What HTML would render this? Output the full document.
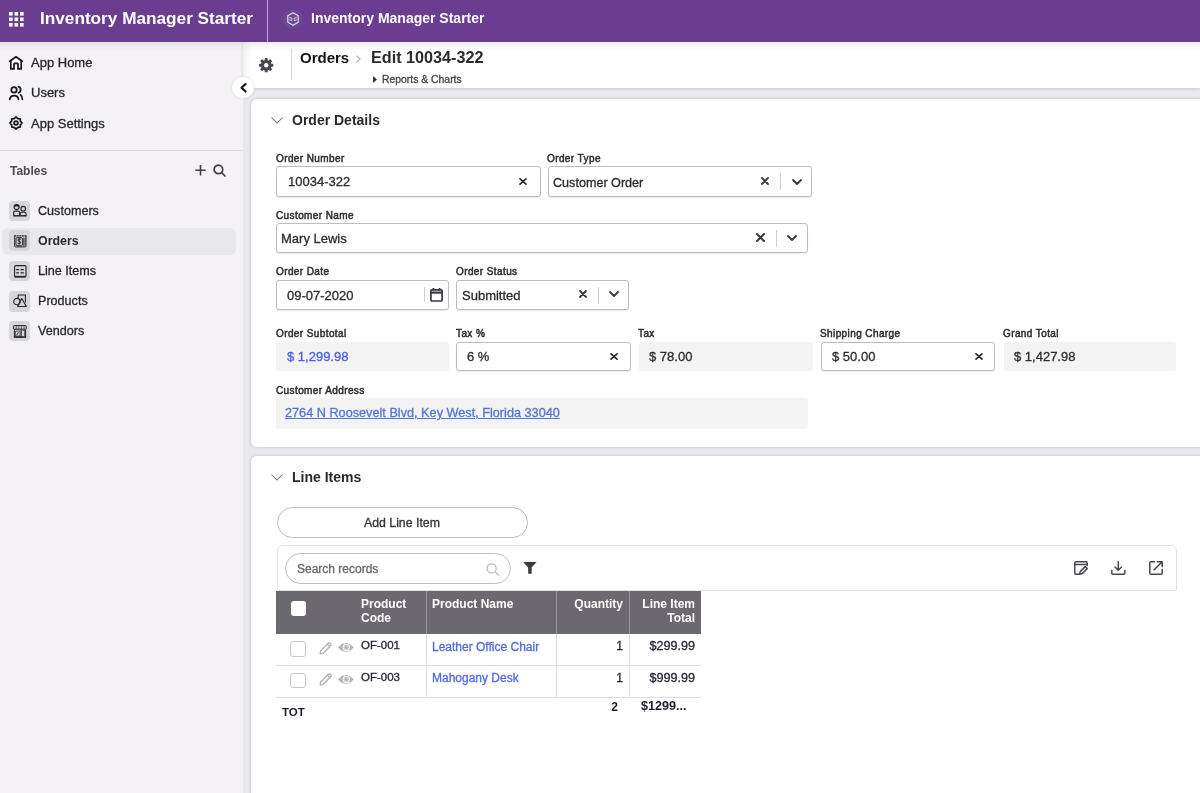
<!DOCTYPE html>
<html><head><meta charset="utf-8">
<style>
*{box-sizing:border-box;margin:0;padding:0}
html,body{width:1200px;height:793px;overflow:hidden;background:#e9e7eb;font-family:"Liberation Sans",sans-serif;color:#333}
.t,.lbl,.val{will-change:transform}
.t,.val{-webkit-text-stroke:0.3px currentColor}
.t[style*="bold"]{-webkit-text-stroke:0}
.a{position:absolute}
.t{position:absolute;line-height:1;white-space:nowrap}
svg{position:absolute;overflow:visible}
#hdr{left:0;top:0;width:1200px;height:42px;background:#6a3d91}
#side{left:0;top:42px;width:243px;height:751px;background:#f4f2f5}
.ib{position:absolute;left:9.2px;width:20.8px;height:20.5px;border-radius:4px;background:#d6d5d9}
.card{position:absolute;left:250.5px;width:960px;background:#fff;border-radius:6px;box-shadow:0 0 3px rgba(40,30,50,0.22)}
.lbl{position:absolute;line-height:1;white-space:nowrap;font-size:10px;font-weight:normal;letter-spacing:0.4px;-webkit-text-stroke:0.5px #2e2e32;color:#2e2e32}
.inp{position:absolute;height:30px;border:1px solid #bdbcc0;border-radius:3px;background:#fff;box-shadow:0 1px 1px rgba(0,0,0,0.08)}
.ro{position:absolute;height:29px;border-radius:3px;background:#f3f3f4}
.val{position:absolute;line-height:1;white-space:nowrap;font-size:13px;color:#2b2b30}
</style></head><body>
<!-- HEADER -->
<div id="hdr" class="a"></div>
<div class="a" style="left:0;top:42px;width:1200px;height:11px;background:linear-gradient(rgba(0,0,0,0.075),rgba(0,0,0,0.02) 50%,rgba(0,0,0,0));z-index:5"></div>
<svg style="left:9px;top:12px" width="15" height="15" viewBox="0 0 15 15" fill="#fff">
<rect x="0" y="0" width="3.6" height="3.6"/><rect x="5.5" y="0" width="3.6" height="3.6"/><rect x="11" y="0" width="3.6" height="3.6"/>
<rect x="0" y="5.5" width="3.6" height="3.6"/><rect x="5.5" y="5.5" width="3.6" height="3.6"/><rect x="11" y="5.5" width="3.6" height="3.6"/>
<rect x="0" y="11" width="3.6" height="3.6"/><rect x="5.5" y="11" width="3.6" height="3.6"/><rect x="11" y="11" width="3.6" height="3.6"/>
</svg>
<div class="t" style="left:40px;top:10.3px;font-size:17.2px;font-weight:bold;color:#fff">Inventory Manager Starter</div>
<div class="a" style="left:267px;top:0;width:1px;height:42px;background:rgba(255,255,255,0.55)"></div>
<div class="a" style="left:283px;top:9px;width:20px;height:20px;border-radius:50%;background:#6b4893"></div>
<svg style="left:287px;top:12px" width="12" height="14" viewBox="0 0 12 14" fill="none" stroke="#e6dcef" stroke-width="1.15" stroke-linejoin="round" stroke-linecap="round"><path d="M6 0.7 L11.2 3.7 L11.2 10.3 L6 13.3 L0.8 10.3 L0.8 3.7 Z"/><path d="M2.6 5.4 L5 6.4 L5 7.2 M2.6 7.8 L4.6 8.6 M9.4 5.4 L7 6.4 L7 7.2 M9.4 7.8 L7.4 8.6" stroke-width="1"/></svg>
<div class="t" style="left:311px;top:10.9px;font-size:14px;font-weight:bold;color:#fff">Inventory Manager Starter</div>

<!-- SIDEBAR -->
<div id="side" class="a"></div>
<!-- app home icon -->
<svg style="left:9px;top:56px" width="14" height="14" viewBox="0 0 14 14" fill="none" stroke="#151518" stroke-width="1.7" stroke-linejoin="round" stroke-linecap="round">
<path d="M0.7 5.3 L7 0.8 L13.3 5.3"/><path d="M1.8 4.8 V12.9 H5 V8.3 Q5 7.4 5.9 7.4 H8.1 Q9 7.4 9 8.3 V12.9 H12.2 V4.8"/>
</svg>
<div class="t" style="left:30.6px;top:55.8px;font-size:13px;color:#28282c">App Home</div>
<svg style="left:9px;top:85px" width="14" height="15" viewBox="0 0 14 15" fill="none" stroke="#151518" stroke-width="1.75" stroke-linecap="round">
<circle cx="5" cy="4.9" r="2.7"/><path d="M0.8 14.3 A4.4 4.3 0 0 1 9.5 14.3"/><path d="M9.4 1.7 A3.2 3.2 0 0 1 9.4 7.8"/><path d="M11.6 9.9 Q13.3 11.3 13.4 14.3"/>
</svg>
<div class="t" style="left:30.6px;top:86.2px;font-size:13px;color:#28282c">Users</div>
<svg style="left:9px;top:116px" width="14" height="14" viewBox="0 0 14 14" fill="none" stroke="#151518" stroke-width="1.75" stroke-linejoin="round">
<path d="M7.00 0.9 L8.80 2.66 L11.24 2.76 L11.34 5.20 L13.1 7.00 L11.34 8.80 L11.24 11.24 L8.80 11.34 L7.00 13.1 L5.20 11.34 L2.76 11.24 L2.66 8.80 L0.9 7.00 L2.66 5.20 L2.76 2.76 L5.20 2.66 Z"/>
<circle cx="7" cy="7" r="1.9"/>
</svg>
<div class="t" style="left:30.6px;top:116.6px;font-size:13px;color:#28282c">App Settings</div>
<div class="a" style="left:0;top:150px;width:243px;height:1px;background:#dcdbdf"></div>
<div class="t" style="left:9.8px;top:164.8px;font-size:12px;font-weight:bold;color:#4d4a52">Tables</div>
<svg style="left:195px;top:165px" width="11" height="11" viewBox="0 0 11 11" stroke="#3f3c44" stroke-width="1.6"><path d="M5.5 0 V10.4 M0.3 5.2 H10.7"/></svg>
<svg style="left:213px;top:164px" width="13" height="13" viewBox="0 0 13 13" fill="none" stroke="#3f3c44" stroke-width="1.7"><circle cx="5.4" cy="5.4" r="4.3"/><path d="M8.6 8.6 L12 12" stroke-linecap="round"/></svg>

<div class="a" style="left:2px;top:227.5px;width:234px;height:27px;border-radius:6px;background:#e8e7ea"></div>
<div class="ib" style="top:200.5px"></div>
<div class="ib" style="top:230.3px"></div>
<div class="ib" style="top:260.7px"></div>
<div class="ib" style="top:291px"></div>
<div class="ib" style="top:320.8px"></div>
<!-- table icons -->
<svg style="left:13px;top:204px" width="14" height="13" viewBox="0 0 14 13" fill="none" stroke="#26262a" stroke-width="1.1">
<circle cx="3.6" cy="3.1" r="2.5"/><path d="M1.2 2.6 Q3.6 0.2 6 2.6" stroke-width="1.6"/><path d="M0.7 11.6 V8.7 Q0.7 7.1 2.3 7.1 H4.9 Q6.5 7.1 6.5 8.7 V11.6"/><circle cx="10.2" cy="4.7" r="2.3"/><path d="M7.3 11.6 V9.8 Q7.3 8.3 8.8 8.3 H11.6 Q13.1 8.3 13.1 9.8 V11.6"/><path d="M0.3 11.8 H13.5" stroke-width="1.5"/>
</svg>
<svg style="left:14px;top:235px" width="13" height="13" viewBox="0 0 13 13" fill="none" stroke="#26262a" stroke-width="1">
<path d="M0.1 0.9 H12.6" stroke-width="1.4" stroke-dasharray="2 0.6"/><path d="M0.7 1.2 V11.3 Q0.7 11.9 1.3 11.9 H11.4 Q12 11.9 12 11.3 V1.2"/><rect x="2" y="2.7" width="6.4" height="8" rx="0.8"/><path d="M9.7 2.6 V10.8 M11 2.6 V10.8" stroke-width="0.8"/><path d="M6.6 4.6 Q6.2 3.8 5.2 3.9 Q4 4 4.1 5.1 Q4.2 6 5.3 6.3 Q6.5 6.6 6.4 7.8 Q6.3 8.8 5.1 8.8 Q4.1 8.7 3.8 8" stroke-width="1.05"/><path d="M5.2 3 V9.7" stroke-width="0.8"/>
</svg>
<svg style="left:14px;top:265px" width="13" height="13" viewBox="0 0 13 13" fill="none" stroke="#26262a" stroke-width="1.1">
<rect x="0.6" y="0.6" width="11.4" height="11.4" rx="1.2"/><path d="M0.6 11.6 H12" stroke-width="1.5"/><path d="M2.6 4.6 H4.6 M7 4.6 H9.4 M2.6 7.8 H4.6 M7 7.8 H9.4" stroke-width="1.2" stroke-linecap="round"/>
</svg>
<svg style="left:13px;top:294px" width="14" height="14" viewBox="0 0 14 14" fill="none" stroke="#26262a" stroke-width="1.1" stroke-linejoin="round">
<path d="M5.2 4.4 V1 H12.4 V8.4"/><circle cx="3.9" cy="7.6" r="3.2"/><path d="M8.8 4.6 L13.3 12.5 H4.6 Z"/>
</svg>
<svg style="left:13px;top:325px" width="14" height="13" viewBox="0 0 14 13" fill="none" stroke="#26262a" stroke-width="1">
<rect x="0.6" y="0.6" width="12.6" height="3.6" rx="0.6"/><path d="M3.2 0.6 V4.2 M5.8 0.6 V4.2 M8.4 0.6 V4.2 M11 0.6 V4.2" stroke-width="0.7"/><path d="M1.4 4.2 V12.1 H12.6 V4.2"/><path d="M0.8 12.1 H13" stroke-width="1.5"/><path d="M8.2 4.4 V12" stroke-width="1.1"/><path d="M2.6 6 H7 V11 H2.6 Z" stroke-width="0.7"/><path d="M3.6 10 L5.6 7.2" stroke-width="0.8"/><path d="M9.4 5.4 H11.6 V11" stroke-width="0.7"/>
</svg>
<div class="t" style="left:37.8px;top:204.8px;font-size:12.6px;color:#28282c">Customers</div>
<div class="t" style="left:37.8px;top:235.1px;font-size:12.4px;font-weight:bold;color:#2a2a2e">Orders</div>
<div class="t" style="left:37.8px;top:264.9px;font-size:12.6px;color:#28282c">Line Items</div>
<div class="t" style="left:37.8px;top:294.9px;font-size:12.6px;color:#28282c">Products</div>
<div class="t" style="left:37.8px;top:325.3px;font-size:12.6px;color:#28282c">Vendors</div>

<!-- MAIN -->
<div class="a" style="left:243px;top:42px;width:957px;height:46px;background:#fff;box-shadow:0 1px 3px rgba(40,30,50,0.14)"></div>
<div class="a" style="left:243px;top:42px;width:9px;height:46px;background:linear-gradient(90deg,rgba(0,0,0,0.05),rgba(0,0,0,0));z-index:4"></div>
<svg style="left:259.2px;top:57.5px" width="14.4" height="14.4" viewBox="-7.2 -7.2 14.4 14.4"><g fill="#4a4650"><circle r="5.3"/><rect x="-1.5" y="-7.15" width="3" height="3.4" rx="0.7" transform="rotate(0)"/><rect x="-1.5" y="-7.15" width="3" height="3.4" rx="0.7" transform="rotate(45)"/><rect x="-1.5" y="-7.15" width="3" height="3.4" rx="0.7" transform="rotate(90)"/><rect x="-1.5" y="-7.15" width="3" height="3.4" rx="0.7" transform="rotate(135)"/><rect x="-1.5" y="-7.15" width="3" height="3.4" rx="0.7" transform="rotate(180)"/><rect x="-1.5" y="-7.15" width="3" height="3.4" rx="0.7" transform="rotate(225)"/><rect x="-1.5" y="-7.15" width="3" height="3.4" rx="0.7" transform="rotate(270)"/><rect x="-1.5" y="-7.15" width="3" height="3.4" rx="0.7" transform="rotate(315)"/></g><circle r="2.2" fill="#fff"/></svg>
<div class="a" style="left:291px;top:49px;width:1px;height:31px;background:#d6d5d8"></div>
<div class="t" style="left:299.5px;top:50px;font-size:15px;font-weight:bold;color:#111">Orders</div>
<svg style="left:355px;top:54.5px" width="7" height="8" viewBox="0 0 7 8" fill="none" stroke="#b5b3b8" stroke-width="1.2"><path d="M1.5 0.8 L5 4 L1.5 7.2"/></svg>
<div class="t" style="left:370.5px;top:49.2px;font-size:16.2px;font-weight:bold;color:#2b2b2e">Edit 10034-322</div>
<svg style="left:373px;top:76px" width="4" height="7" viewBox="0 0 4 7" fill="#333"><path d="M0 0 L4 3.5 L0 7 Z"/></svg>
<div class="t" style="left:382px;top:74.6px;font-size:10.4px;color:#444">Reports &amp; Charts</div>

<!-- CARD 1 -->
<div class="card" style="top:98.6px;height:348.4px"></div>
<svg style="left:270.5px;top:116.5px" width="12" height="7" viewBox="0 0 12 7" fill="none" stroke="#6b6870" stroke-width="1.05"><path d="M0.5 0.5 L6 6 L11.5 0.5"/></svg>
<div class="t" style="left:292px;top:112.8px;font-size:14px;font-weight:bold;color:#2a2a2e">Order Details</div>

<div class="lbl" style="left:275.9px;top:154.3px">Order Number</div>
<div class="inp" style="left:276px;top:166.2px;width:264.5px;height:30.4px"></div>
<div class="val" style="left:287.5px;top:175px">10034-322</div>

<div class="lbl" style="left:547.4px;top:154.3px">Order Type</div>
<div class="inp" style="left:547.5px;top:166.2px;width:264.5px;height:30.4px"></div>
<div class="val" style="left:553.3px;top:177.4px;font-size:12.6px">Customer Order</div>

<div class="lbl" style="left:275.9px;top:211.3px">Customer Name</div>
<div class="inp" style="left:276px;top:223.2px;width:532px"></div>
<div class="val" style="left:281px;top:232px">Mary Lewis</div>

<div class="lbl" style="left:275.9px;top:267.3px">Order Date</div>
<div class="inp" style="left:276px;top:280.2px;width:172.5px;height:29.4px"></div>
<div class="val" style="left:287px;top:288.6px">09-07-2020</div>

<div class="lbl" style="left:456.4px;top:267.3px">Order Status</div>
<div class="inp" style="left:456.3px;top:280.3px;width:173.2px;height:29.4px"></div>
<div class="val" style="left:462px;top:289px">Submitted</div>

<div class="lbl" style="left:275.9px;top:329.3px">Order Subtotal</div>
<div class="ro" style="left:276.3px;top:342.1px;width:172.5px"></div>
<div class="val" style="left:286.6px;top:350px;color:#4560ee">$ 1,299.98</div>

<div class="lbl" style="left:456.4px;top:329.3px">Tax %</div>
<div class="inp" style="left:456.4px;top:342.3px;width:175px;height:29px"></div>
<div class="val" style="left:467px;top:350px">6 %</div>

<div class="lbl" style="left:638.4px;top:329.3px">Tax</div>
<div class="ro" style="left:639px;top:342.1px;width:174.3px"></div>
<div class="val" style="left:649px;top:350px">$ 78.00</div>

<div class="lbl" style="left:820.4px;top:329.3px">Shipping Charge</div>
<div class="inp" style="left:821.3px;top:342.3px;width:173.7px;height:29px"></div>
<div class="val" style="left:831.7px;top:350px">$ 50.00</div>

<div class="lbl" style="left:1002.9px;top:329.3px">Grand Total</div>
<div class="ro" style="left:1003.7px;top:342.1px;width:172.5px"></div>
<div class="val" style="left:1013.6px;top:350px">$ 1,427.98</div>

<div class="lbl" style="left:275.9px;top:386.3px">Customer Address</div>
<div class="ro" style="left:276.3px;top:398.1px;width:531.5px;height:30.5px"></div>
<div class="val" style="left:285px;top:406.6px;font-size:12.7px;color:#5274d8;text-decoration:underline">2764 N Roosevelt Blvd, Key West, Florida 33040</div>

<!-- CARD 2 -->
<div class="card" style="top:455.8px;height:400px"></div>
<svg style="left:270.5px;top:473.5px" width="12" height="7" viewBox="0 0 12 7" fill="none" stroke="#6b6870" stroke-width="1.05"><path d="M0.5 0.5 L6 6 L11.5 0.5"/></svg>
<div class="t" style="left:292px;top:469.8px;font-size:14px;font-weight:bold;color:#2a2a2e">Line Items</div>

<div class="a" style="left:276.5px;top:507px;width:251px;height:31.2px;border:1px solid #bdbcc0;border-radius:16px;background:#fff"></div>
<div class="t" style="left:363.5px;top:516.6px;font-size:12.3px;color:#333">Add Line Item</div>

<div class="a" style="left:276.5px;top:545.2px;width:900px;height:46.3px;border:1px solid #e2e1e4;border-radius:6px 6px 0 0"></div>
<div class="a" style="left:285px;top:553.3px;width:225.5px;height:30.4px;border:1px solid #bdbcc0;border-radius:15.5px;background:#fff"></div>
<div class="t" style="left:296.8px;top:562.6px;font-size:12px;color:#666">Search records</div>

<!-- input icons -->
<svg style="left:518.7px;top:177.7px" width="8" height="7" viewBox="0 0 8 7" stroke="#222" stroke-width="1.6" stroke-linecap="round"><path d="M1 0.8 L7 6.2 M7 0.8 L1 6.2"/></svg>
<svg style="left:760.8px;top:177px" width="8" height="8" viewBox="0 0 8 8" stroke="#3a3740" stroke-width="1.8" stroke-linecap="round"><path d="M1 1 L7 7 M7 1 L1 7"/></svg>
<div class="a" style="left:780.3px;top:173.2px;width:1px;height:17px;background:#cfced2"></div>
<svg style="left:792px;top:179px" width="10" height="6" viewBox="0 0 10 6" fill="none" stroke="#3a3740" stroke-width="1.8" stroke-linecap="round" stroke-linejoin="round"><path d="M1 1 L5 5 L9 1"/></svg>

<svg style="left:756px;top:233.2px" width="9" height="9" viewBox="0 0 9 9" stroke="#3a3740" stroke-width="2" stroke-linecap="round"><path d="M1 1 L8 8 M8 1 L1 8"/></svg>
<div class="a" style="left:775.8px;top:229.5px;width:1px;height:17px;background:#cfced2"></div>
<svg style="left:787.3px;top:235.3px" width="10" height="6" viewBox="0 0 10 6" fill="none" stroke="#3a3740" stroke-width="1.8" stroke-linecap="round" stroke-linejoin="round"><path d="M1 1 L5 5 L9 1"/></svg>

<div class="a" style="left:424px;top:287px;width:1px;height:15px;background:#cfced2"></div>
<svg style="left:430px;top:288px" width="13" height="14" viewBox="0 0 13 14" fill="none" stroke="#3a3740" stroke-width="1.7"><rect x="0.9" y="1.8" width="11.2" height="11.2" rx="1"/><path d="M0.9 4.6 H12.1" stroke-width="2.2"/><path d="M3.4 0 V2.4 M9.6 0 V2.4"/></svg>

<svg style="left:578.6px;top:290px" width="8" height="8" viewBox="0 0 8 8" stroke="#3a3740" stroke-width="1.8" stroke-linecap="round"><path d="M1 1 L7 7 M7 1 L1 7"/></svg>
<div class="a" style="left:598px;top:286.5px;width:1px;height:17px;background:#cfced2"></div>
<svg style="left:609.3px;top:291px" width="10" height="6" viewBox="0 0 10 6" fill="none" stroke="#3a3740" stroke-width="1.8" stroke-linecap="round" stroke-linejoin="round"><path d="M1 1 L5 5 L9 1"/></svg>

<svg style="left:610px;top:353px" width="8" height="7" viewBox="0 0 8 7" stroke="#222" stroke-width="1.6" stroke-linecap="round"><path d="M1 0.8 L7 6.2 M7 0.8 L1 6.2"/></svg>
<svg style="left:975px;top:353px" width="8" height="7" viewBox="0 0 8 7" stroke="#222" stroke-width="1.6" stroke-linecap="round"><path d="M1 0.8 L7 6.2 M7 0.8 L1 6.2"/></svg>

<!-- collapse button -->
<div class="a" style="left:232.2px;top:77.1px;width:21.4px;height:21.4px;border-radius:50%;background:#fff;box-shadow:0 0 3px rgba(0,0,0,0.12);z-index:6"></div>
<svg style="left:239.6px;top:83.2px;z-index:7" width="7" height="10" viewBox="0 0 7 10" fill="none" stroke="#111" stroke-width="2.1" stroke-linecap="round" stroke-linejoin="round"><path d="M5.6 1 L1.5 4.8 L5.6 8.6"/></svg>

<!-- search & filter -->
<svg style="left:486px;top:562.5px" width="14" height="12" viewBox="0 0 14 12" fill="none" stroke="#b9b8bc" stroke-width="1.2"><circle cx="5.6" cy="5.4" r="4.6"/><path d="M9 8.8 L12.6 12" stroke-linecap="round"/></svg>
<svg style="left:522.5px;top:561.5px" width="14" height="12" viewBox="0 0 14 12" fill="#3a3740"><path d="M0.2 0 H13.6 L8.6 5.6 V11.7 L5.2 11.7 V5.6 Z"/></svg>

<!-- toolbar right icons -->
<svg style="left:1074px;top:561px" width="15" height="14" viewBox="0 0 15 14" fill="none" stroke="#4a4650" stroke-width="1.5" stroke-linecap="round" stroke-linejoin="round"><path d="M5 13.2 H2 Q0.8 13.2 0.8 12 V2 Q0.8 0.8 2 0.8 H12 Q13.2 0.8 13.2 2 V4.6"/><path d="M0.8 3.6 H13.2"/><path d="M5.6 13.2 L6.2 10.6 L11.2 5.6 L13.2 7.6 L8.2 12.6 Z"/></svg>
<svg style="left:1111px;top:561px" width="15" height="14" viewBox="0 0 15 14" fill="none" stroke="#4a4650" stroke-width="1.5" stroke-linecap="round" stroke-linejoin="round"><path d="M7.3 0.8 V9.2 M4 6 L7.3 9.2 L10.6 6"/><path d="M0.8 9.6 V12.2 Q0.8 13.2 1.8 13.2 H12.8 Q13.8 13.2 13.8 12.2 V9.6"/></svg>
<svg style="left:1149px;top:561px" width="14" height="14" viewBox="0 0 14 14" fill="none" stroke="#4a4650" stroke-width="1.5" stroke-linecap="round" stroke-linejoin="round"><path d="M5.6 0.8 H1.8 Q0.8 0.8 0.8 1.8 V12.2 Q0.8 13.2 1.8 13.2 H12.2 Q13.2 13.2 13.2 12.2 V8.4"/><path d="M8.4 0.8 H13.2 V5.6 M13.2 0.8 L5.2 8.8"/></svg>

<!-- TABLE -->
<div class="a" style="left:276px;top:591.3px;width:425px;height:42.7px;background:#6c686f"></div>
<div class="a" style="left:425.5px;top:591.3px;width:1px;height:42.7px;background:#9a979d"></div>
<div class="a" style="left:555.5px;top:591.3px;width:1px;height:42.7px;background:#9a979d"></div>
<div class="a" style="left:629px;top:591.3px;width:1px;height:42.7px;background:#9a979d"></div>
<div class="a" style="left:291.3px;top:600.8px;width:15px;height:15px;border-radius:3px;background:#fff"></div>
<div class="t" style="left:361.4px;top:598.1px;font-size:12px;font-weight:bold;color:#fff;line-height:13.6px">Product<br>Code</div>
<div class="t" style="left:432px;top:598.1px;font-size:12px;font-weight:bold;color:#fff;line-height:13.6px">Product Name</div>
<div class="t" style="left:574px;top:598.1px;font-size:12px;font-weight:bold;color:#fff;line-height:13.6px;width:49px;text-align:right">Quantity</div>
<div class="t" style="left:636px;top:598.1px;font-size:12px;font-weight:bold;color:#fff;line-height:13.6px;width:59px;text-align:right">Line Item<br>Total</div>

<div class="a" style="left:276px;top:665.2px;width:425px;height:1px;background:#dedde0"></div>
<div class="a" style="left:276px;top:696.8px;width:425px;height:1px;background:#dedde0"></div>
<div class="a" style="left:425.5px;top:634px;width:1px;height:63px;background:#dedde0"></div>
<div class="a" style="left:555.5px;top:634px;width:1px;height:63px;background:#dedde0"></div>
<div class="a" style="left:629px;top:634px;width:1px;height:63px;background:#dedde0"></div>

<div class="a" style="left:290px;top:641.2px;width:15.7px;height:15.8px;border:1.3px solid #c9c8cc;border-radius:3px;background:#fff"></div>
<div class="a" style="left:290px;top:672.7px;width:15.7px;height:15.8px;border:1.3px solid #c9c8cc;border-radius:3px;background:#fff"></div>

<svg style="left:319px;top:641.5px" width="13" height="13" viewBox="0 0 13 13" fill="none" stroke="#b0afb3" stroke-width="1.25" stroke-linejoin="round"><path d="M1.2 11.8 L1.5 9 L9.2 1.3 Q10.2 0.4 11.2 1.3 L11.7 1.8 Q12.6 2.8 11.7 3.8 L4 11.5 Z"/><path d="M8.4 2.2 L10.8 4.6"/></svg>
<svg style="left:338.3px;top:642.3px" width="16" height="11" viewBox="0 0 16 11" fill="#b5b4b8"><path d="M0 5.4 Q7.8 -3.4 15.7 5.4 Q7.8 14.2 0 5.4 Z"/><circle cx="8.3" cy="5.4" r="3.7" fill="#fff"/><circle cx="8.3" cy="5.4" r="2.8" fill="#d2d1d4"/><path d="M7.8 3.6 V6 H9.9" fill="none" stroke="#a09fa3" stroke-width="1.1"/></svg>

<svg style="left:319px;top:673px" width="13" height="13" viewBox="0 0 13 13" fill="none" stroke="#b0afb3" stroke-width="1.25" stroke-linejoin="round"><path d="M1.2 11.8 L1.5 9 L9.2 1.3 Q10.2 0.4 11.2 1.3 L11.7 1.8 Q12.6 2.8 11.7 3.8 L4 11.5 Z"/><path d="M8.4 2.2 L10.8 4.6"/></svg>
<svg style="left:338.3px;top:673.8px" width="16" height="11" viewBox="0 0 16 11" fill="#b5b4b8"><path d="M0 5.4 Q7.8 -3.4 15.7 5.4 Q7.8 14.2 0 5.4 Z"/><circle cx="8.3" cy="5.4" r="3.7" fill="#fff"/><circle cx="8.3" cy="5.4" r="2.8" fill="#d2d1d4"/><path d="M7.8 3.6 V6 H9.9" fill="none" stroke="#a09fa3" stroke-width="1.1"/></svg>

<div class="t" style="left:361.4px;top:640px;font-size:11.5px;color:#2a2236">OF-001</div>
<div class="t" style="left:361.4px;top:671.5px;font-size:11.5px;color:#2a2236">OF-003</div>
<div class="t" style="left:432px;top:640.5px;font-size:12px;color:#4f6be6">Leather Office Chair</div>
<div class="t" style="left:432px;top:672px;font-size:12px;color:#4f6be6">Mahogany Desk</div>
<div class="t" style="left:573px;top:640px;font-size:12px;color:#2a2236;width:50px;text-align:right">1</div>
<div class="t" style="left:573px;top:671.5px;font-size:12px;color:#2a2236;width:50px;text-align:right">1</div>
<div class="t" style="left:640px;top:640px;font-size:12.6px;color:#2a2236;width:55px;text-align:right">$299.99</div>
<div class="t" style="left:640px;top:671.5px;font-size:12.6px;color:#2a2236;width:55px;text-align:right">$999.99</div>
<div class="t" style="left:282.4px;top:706.6px;font-size:11.5px;font-weight:bold;color:#1f1a2a">TOT</div>
<div class="t" style="left:568px;top:700.5px;font-size:12px;font-weight:bold;color:#1f1a2a;width:50px;text-align:right">2</div>
<div class="t" style="left:641px;top:700.2px;font-size:12.6px;font-weight:bold;color:#1f1a2a">$1299...</div>
</body></html>
